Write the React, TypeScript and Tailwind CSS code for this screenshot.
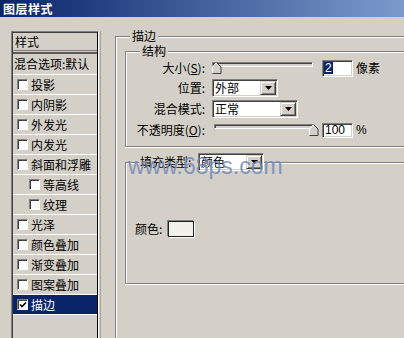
import React from "react";

const sunken =
  "border border-t-[#808080] border-l-[#808080] border-r-white border-b-white shadow-[inset_1px_1px_0_#404040,inset_-1px_-1px_0_#d4d0c8]";
const raised =
  "border border-t-[#d4d0c8] border-l-[#d4d0c8] border-r-[#404040] border-b-[#404040] shadow-[inset_1px_1px_0_#ffffff,inset_-1px_-1px_0_#808080]";

function Check({ checked }: { checked?: boolean }) {
  return (
    <span className="relative inline-block w-[11px] h-[11px] shrink-0 bg-white border border-t-[#808080] border-l-[#808080] border-r-white border-b-white shadow-[inset_1px_1px_0_#404040]">
      {checked && (
        <svg className="absolute left-[1px] top-[1px]" width="8" height="8" viewBox="0 0 8 8">
          <path d="M1 3.5 L3 5.5 L7 1.5" stroke="#000" strokeWidth="1.6" fill="none" />
        </svg>
      )}
    </span>
  );
}

function Arrow() {
  return (
    <svg width="7" height="4" viewBox="0 0 7 4">
      <polygon points="0,0 7,0 3.5,4" fill="#000" />
    </svg>
  );
}

function Select({ w, text }: { w: string; text: string }) {
  return (
    <div className={`${w} h-[18px] bg-white flex items-center ${sunken}`}>
      <span className="flex-1 pl-[2px] leading-[14px] text-black">{text}</span>
      <span className={`w-[16px] h-[14px] mr-[1px] flex items-center justify-center bg-[#d4d0c8] ${raised}`}>
        <Arrow />
      </span>
    </div>
  );
}

function Slider({ right }: { right?: boolean }) {
  return (
    <div className="relative w-[101px] h-[12px]">
      <div className={`h-[5px] w-full bg-[#d4d0c8] ${sunken}`} />
      <svg
        className={`absolute top-0 ${right ? "right-[-4px]" : "left-0"}`}
        width="10"
        height="12"
        viewBox="0 0 10 12"
      >
        <polygon points="4.5,0.5 9,5 9,11.5 0.5,11.5 0.5,5" fill="#d4d0c8" />
        <polyline points="0.5,11 0.5,5 4.5,0.5" stroke="#fff" fill="none" />
        <polyline points="4.5,0.5 9,5 9,11.5 0.5,11.5" stroke="#404040" fill="none" />
      </svg>
    </div>
  );
}

const items: { t: string; indent?: boolean; sel?: boolean }[] = [
  { t: "投影" },
  { t: "内阴影" },
  { t: "外发光" },
  { t: "内发光" },
  { t: "斜面和浮雕" },
  { t: "等高线", indent: true },
  { t: "纹理", indent: true },
  { t: "光泽" },
  { t: "颜色叠加" },
  { t: "渐变叠加" },
  { t: "图案叠加" },
  { t: "描边", sel: true },
];

export default function App() {
  return (
    <div className="relative w-[404px] h-[338px] overflow-hidden bg-[#d4d0c8] text-[12px] text-black font-['Noto_Sans_CJK_SC',sans-serif]">
      {/* title bar */}
      <div className="h-[17px] bg-[linear-gradient(to_right,#0a246a,#7b9bcc)] flex items-center pl-[3px]">
        <span className="text-white font-bold text-[12px] leading-[15px] tracking-[0.5px]">图层样式</span>
      </div>

      <div className="flex items-start">
        {/* left list */}
        <div className="ml-[11px] mt-[14px] w-[88px] h-[400px] border-t border-l border-t-[#808080] border-l-[#808080] border-r border-r-white">
          <div className="h-full border-t border-l border-t-[#404040] border-l-[#404040] border-r border-r-black">
            <div className="h-[17px] flex items-center pl-[2px] leading-[14px]">样式</div>
            <div className="h-[4px] border-t border-t-[#808080] border-b-2 border-b-[#5a5a5a]" />
            <div className="h-[21px] flex items-center pl-[1px] border-b border-white leading-[14px] whitespace-nowrap">
              混合选项:默认
            </div>
            {items.map((it) => (
              <div
                key={it.t}
                className={`h-[20px] flex items-center gap-[3px] border-b border-white leading-[14px] whitespace-nowrap ${
                  it.indent ? "pl-[16px]" : "pl-[4px]"
                } ${it.sel ? "bg-[#0a246a] text-white" : ""}`}
              >
                <Check checked={it.sel} />
                <span>{it.t}</span>
              </div>
            ))}
          </div>
        </div>

        <div className="ml-[1px] mt-[14px] w-px h-[400px] bg-[#a8a49c]" />

        {/* outer group 描边 */}
        <div className="relative ml-[14px] mt-[19px] flex-1 h-[400px] border-t border-l border-[#808080] shadow-[inset_1px_1px_0_#ffffff]">
          <span className="absolute left-[14px] top-[-9px] px-[2px] h-[16px] leading-[16px] bg-[#d4d0c8]">描边</span>

          {/* inner group 结构 */}
          <div className="relative ml-[9px] mt-[14px] border-t border-l border-b border-[#808080] shadow-[inset_1px_1px_0_#ffffff,0_1px_0_#ffffff] pt-[6px] pb-[6px]">
            <span className="absolute left-[14px] top-[-9px] px-[2px] h-[16px] leading-[16px] bg-[#d4d0c8]">结构</span>

            <div className="h-[20px] flex items-center">
              <span className="w-[79px] text-right leading-[14px] whitespace-nowrap">
                大小(<span className="underline">S</span>):
              </span>
              <div className="ml-[7px]">
                <Slider />
              </div>
              <div className={`ml-[9px] w-[31px] h-[17px] bg-white flex items-center ${sunken}`}>
                <span className="ml-[1px] px-[1px] bg-[#0a246a] text-white leading-[12px] font-['Liberation_Sans',sans-serif]">2</span>
              </div>
              <span className="ml-[3px] leading-[14px]">像素</span>
            </div>

            <div className="h-[20px] flex items-center">
              <span className="w-[79px] text-right leading-[14px]">位置:</span>
              <div className="ml-[7px]">
                <Select w="w-[66px]" text="外部" />
              </div>
            </div>

            <div className="h-[22px] flex items-center">
              <span className="w-[79px] text-right leading-[14px]">混合模式:</span>
              <div className="ml-[7px]">
                <Select w="w-[86px]" text="正常" />
              </div>
            </div>

            <div className="h-[20px] flex items-center">
              <span className="w-[79px] text-right leading-[14px] whitespace-nowrap">
                不透明度(<span className="underline">O</span>):
              </span>
              <div className="ml-[9px]">
                <Slider right />
              </div>
              <div className={`ml-[7px] w-[31px] h-[15px] bg-white flex items-center ${sunken}`}>
                <span className="ml-[2px] leading-[12px] font-['Liberation_Sans',sans-serif]">100</span>
              </div>
              <span className="ml-[3px] leading-[14px] font-['Liberation_Sans',sans-serif]">%</span>
            </div>
          </div>

          {/* inner group 填充类型 */}
          <div className="relative ml-[9px] mt-[15px] h-[122px] border-t border-l border-b border-[#808080] shadow-[inset_1px_1px_0_#ffffff,0_1px_0_#ffffff]">
            <div className="absolute left-[13px] top-[-10px] flex items-center bg-[#d4d0c8] pl-[1px]">
              <span className="w-[55px] leading-[14px] whitespace-nowrap">填充类型:</span>
              <div className="ml-[3px]">
                <Select w="w-[66px]" text="颜色" />
              </div>
            </div>
            <div className="pt-[58px] pl-[9px] flex items-center">
              <span className="w-[30px] leading-[14px]">颜色:</span>
              <span className="ml-[3px] w-[26px] h-[16px] bg-[#f1f0ea] border border-[#202020] shadow-[1px_1px_0_#ffffff,-1px_-1px_0_#808080]" />
            </div>
          </div>
        </div>
      </div>

      {/* watermark */}
      <span className="absolute left-[128px] top-[155px] text-[23px] leading-[23px] text-[#6d86b8] opacity-80 font-['Liberation_Sans',sans-serif] pointer-events-none whitespace-nowrap">
        www.68ps.com
      </span>
    </div>
  );
}
